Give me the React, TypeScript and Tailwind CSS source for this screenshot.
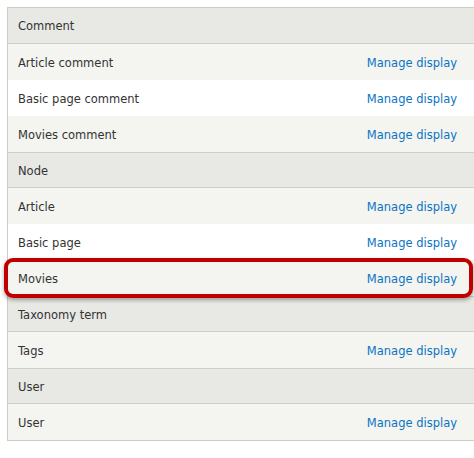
const groups: { title: string; items: string[] }[] = [
  { title: 'Comment', items: ['Article comment', 'Basic page comment', 'Movies comment'] },
  { title: 'Node', items: ['Article', 'Basic page', 'Movies'] },
  { title: 'Taxonomy term', items: ['Tags'] },
  { title: 'User', items: ['User'] },
]

function TitleRow({ title, first }: { title: string; first: boolean }) {
  return (
    <div
      className={`h-9 flex items-center pt-[3px] pl-[10px] bg-[#e8e8e4] border-b border-[#cccccc] ${
        first ? '' : 'border-t'
      } box-border`}
    >
      <span className="text-[#333333]">{title}</span>
    </div>
  )
}

function ItemRow({ label, odd, highlight }: { label: string; odd: boolean; highlight?: boolean }) {
  return (
    <div
      className={`relative h-9 flex items-center justify-between pt-[3px] pl-[10px] pr-[17px] ${
        odd ? 'bg-[#f4f4f0]' : 'bg-white'
      }`}
    >
      <span className="text-[#333333]">{label}</span>
      <a href="#" className="text-[#0a74c4]">Manage display</a>
      {highlight && (
        <div className="absolute left-[-4px] right-[1px] top-[-2px] bottom-[-2px] rounded-[9px] border-[4px] border-[#c00000] shadow-[0_2px_4px_rgba(0,0,0,0.35)] pointer-events-none" />
      )}
    </div>
  )
}

export default function App() {
  return (
    <div className="w-[474px] h-[458px] bg-white overflow-hidden pl-[7px] pt-[7px] text-[11.5px] font-['DejaVu_Sans',sans-serif]">
      <div className="border-l border-t border-b border-[#cccccc]">
        {groups.map((g, gi) => (
          <div key={g.title}>
            <TitleRow title={g.title} first={gi === 0} />
            {g.items.map((it, i) => (
              <ItemRow key={it} label={it} odd={i % 2 === 0} highlight={g.title === 'Node' && it === 'Movies'} />
            ))}
          </div>
        ))}
      </div>
    </div>
  )
}
